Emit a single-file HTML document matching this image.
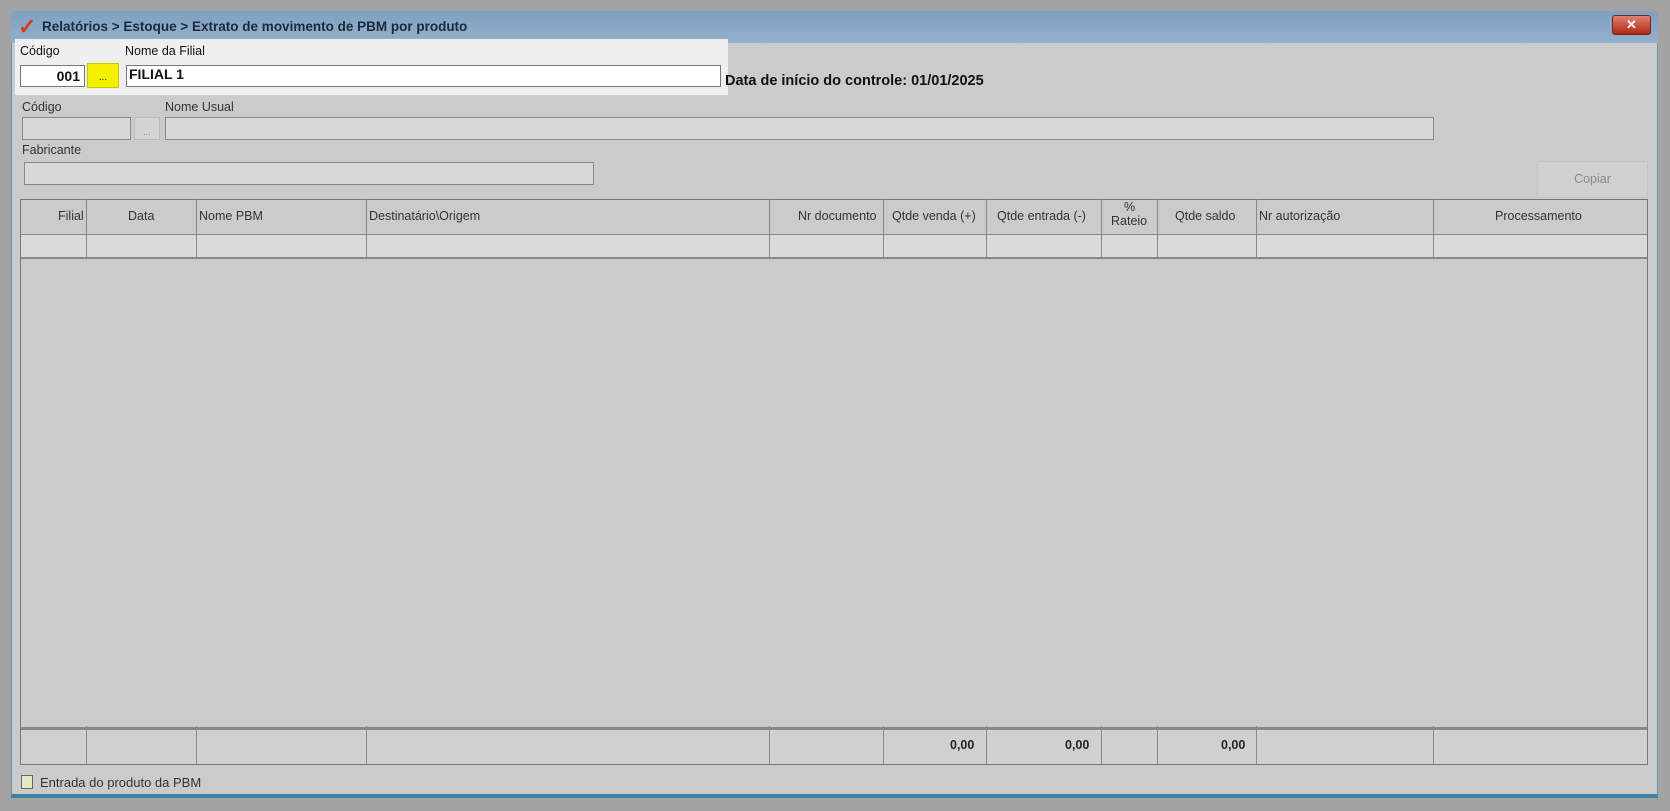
<!DOCTYPE html>
<html><head><meta charset="utf-8"><style>
*{box-sizing:border-box;margin:0;padding:0}
body{width:1670px;height:811px;background:#a3a3a3;font-family:"Liberation Sans",sans-serif;font-size:12px;color:#222;position:relative;overflow:hidden}
.a{position:absolute}
.win{left:11px;top:11px;width:1647px;height:787px;background:#cbcbcb;border:1px solid #6a8fb0;border-bottom:4px solid #3f7fa0;border-radius:5px 5px 0 0}
.title{left:11px;top:11px;width:1647px;height:32px;background:linear-gradient(#7fa0c0,#95b0cc);border-radius:5px 5px 0 0}
.inp{border:1px solid #888;background:#d8d8d8}
.lbl{font-size:12.5px;color:#333}
.grid{left:20px;top:199px;width:1628px;height:566px;border:1px solid #777;background:#cbcbcb}
.col{position:absolute;top:0;width:1px;background:#888}
.h{position:absolute;font-size:12.5px;color:#333}
</style></head><body>
<div class="a win"></div>
<div class="a title"></div>
<div class="a" style="left:18px;top:14px;font-size:22px;color:#d63a1a;font-weight:bold">✓</div>
<div class="a" style="left:42px;top:19px;font-size:13.5px;font-weight:bold;color:#1a2a3a">Relatórios &gt; Estoque &gt; Extrato de movimento de PBM por produto</div>
<div class="a" style="left:1612px;top:15px;width:39px;height:20px;background:linear-gradient(#e08070,#b02818);border:1px solid #6a2a20;border-radius:3px;color:#fff;font-weight:bold;text-align:center;font-size:13px;line-height:18px">✕</div>

<div class="a" style="left:15px;top:39px;width:713px;height:56px;background:#f0f0f0"></div>
<div class="a lbl" style="left:20px;top:44px;color:#111">Código</div>
<div class="a lbl" style="left:125px;top:44px;color:#111">Nome da Filial</div>
<div class="a" style="left:20px;top:65px;width:65px;height:22px;background:#fff;border:1px solid #777;text-align:right;padding-right:4px;font-weight:bold;font-size:14px;line-height:20px;color:#111">001</div>
<div class="a" style="left:87px;top:63px;width:32px;height:25px;background:#f4f000;border:1px solid #c8c800;text-align:center;font-size:10px;line-height:28px">...</div>
<div class="a" style="left:126px;top:65px;width:595px;height:22px;background:#fff;border:1px solid #777;padding-left:2px;font-weight:bold;font-size:14px;line-height:16px;color:#111">FILIAL 1</div>
<div class="a" style="left:725px;top:73px;font-weight:bold;font-size:14.5px;color:#111">Data de início do controle: 01/01/2025</div>

<div class="a lbl" style="left:22px;top:100px">Código</div>
<div class="a lbl" style="left:165px;top:100px">Nome Usual</div>
<div class="a inp" style="left:22px;top:117px;width:109px;height:23px"></div>
<div class="a" style="left:134px;top:117px;width:26px;height:23px;background:#d4d4d4;border:1px solid #bbb;text-align:center;font-size:9px;line-height:28px;color:#777">...</div>
<div class="a inp" style="left:165px;top:117px;width:1269px;height:23px"></div>
<div class="a lbl" style="left:22px;top:143px">Fabricante</div>
<div class="a inp" style="left:24px;top:162px;width:570px;height:23px"></div>
<div class="a" style="left:1537px;top:161px;width:111px;height:37px;background:#d0d0d0;border:1px solid #c4c4c4;text-align:center;line-height:35px;color:#8a8a8a;font-size:12.5px">Copiar</div>

<div class="a grid">
 <div class="a" style="left:0;top:0;width:1626px;height:35px;border-bottom:1px solid #888"></div>
 <div class="a" style="left:0;top:35px;width:1626px;height:24px;background:#dadada;border-bottom:2px solid #888"></div>
 <div class="a" style="left:0;top:527px;width:1626px;height:37px;border-top:3px solid #888;background:#d0d0d0"></div>
</div>
<div class="a" style="left:20px;top:199px;width:1628px;height:566px">
 <div class="col" style="left:66px;height:60px"></div><div class="col" style="left:66px;top:527px;height:38px"></div>
 <div class="col" style="left:176px;height:60px"></div><div class="col" style="left:176px;top:527px;height:38px"></div>
 <div class="col" style="left:346px;height:60px"></div><div class="col" style="left:346px;top:527px;height:38px"></div>
 <div class="col" style="left:749px;height:60px"></div><div class="col" style="left:749px;top:527px;height:38px"></div>
 <div class="col" style="left:863px;height:60px"></div><div class="col" style="left:863px;top:527px;height:38px"></div>
 <div class="col" style="left:966px;height:60px"></div><div class="col" style="left:966px;top:527px;height:38px"></div>
 <div class="col" style="left:1081px;height:60px"></div><div class="col" style="left:1081px;top:527px;height:38px"></div>
 <div class="col" style="left:1137px;height:60px"></div><div class="col" style="left:1137px;top:527px;height:38px"></div>
 <div class="col" style="left:1236px;height:60px"></div><div class="col" style="left:1236px;top:527px;height:38px"></div>
 <div class="col" style="left:1413px;height:60px"></div><div class="col" style="left:1413px;top:527px;height:38px"></div>
 <div class="h" style="left:38px;top:10px">Filial</div>
 <div class="h" style="left:108px;top:10px">Data</div>
 <div class="h" style="left:179px;top:10px">Nome PBM</div>
 <div class="h" style="left:349px;top:10px">Destinatário\Origem</div>
 <div class="h" style="left:778px;top:10px">Nr documento</div>
 <div class="h" style="left:872px;top:10px">Qtde venda (+)</div>
 <div class="h" style="left:977px;top:10px">Qtde entrada (-)</div>
 <div class="h" style="left:1104px;top:1px">%</div>
 <div class="h" style="left:1091px;top:15px">Rateio</div>
 <div class="h" style="left:1155px;top:10px">Qtde saldo</div>
 <div class="h" style="left:1239px;top:10px">Nr autorização</div>
 <div class="h" style="left:1475px;top:10px">Processamento</div>
 <div class="h" style="left:930px;top:539px;font-weight:bold;color:#222">0,00</div>
 <div class="h" style="left:1045px;top:539px;font-weight:bold;color:#222">0,00</div>
 <div class="h" style="left:1201px;top:539px;font-weight:bold;color:#222">0,00</div>
</div>
<div class="a" style="left:21px;top:775px;width:12px;height:14px;border:1px solid #666;background:#e8e8c0"></div>
<div class="a lbl" style="left:40px;top:775px;font-size:13px">Entrada do produto da PBM</div>
</body></html>
